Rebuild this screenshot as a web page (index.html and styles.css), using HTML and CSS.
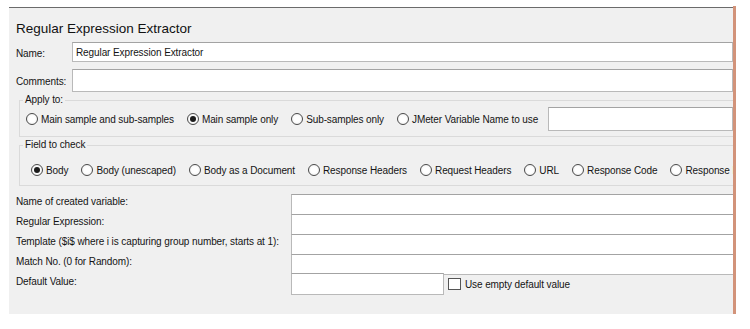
FILE: index.html
```html
<!DOCTYPE html>
<html lang="en">
<head>
    <meta charset="UTF-8">
    <meta name="viewport" content="width=device-width, initial-scale=1.0">
    <title>Regular Expression Extractor</title>
    <link rel="stylesheet" href="styles.css">
</head>
<body>
    <div class="window">
        <div class="panel">
            <h1 class="title">Regular Expression Extractor</h1>

            <div class="field-row name-row">
                <label class="row-label">Name:</label>
                <div class="text-box">Regular Expression Extractor</div>
            </div>
            <div class="field-row comments-row">
                <label class="row-label">Comments:</label>
                <div class="text-box"></div>
            </div>

            <fieldset class="group apply-group">
                <legend>Apply to:</legend>
                <div class="radio-row">
                    <span class="radio"><span class="dot"></span>Main sample and sub-samples</span>
                    <span class="radio"><span class="dot checked"></span>Main sample only</span>
                    <span class="radio"><span class="dot"></span>Sub-samples only</span>
                    <span class="radio"><span class="dot"></span>JMeter Variable Name to use</span>
                    <div class="text-box var-box"></div>
                </div>
            </fieldset>

            <fieldset class="group check-group">
                <legend>Field to check</legend>
                <div class="radio-row">
                    <span class="radio"><span class="dot checked"></span>Body</span>
                    <span class="radio"><span class="dot"></span>Body (unescaped)</span>
                    <span class="radio"><span class="dot"></span>Body as a Document</span>
                    <span class="radio"><span class="dot"></span>Response Headers</span>
                    <span class="radio"><span class="dot"></span>Request Headers</span>
                    <span class="radio"><span class="dot"></span>URL</span>
                    <span class="radio"><span class="dot"></span>Response Code</span>
                    <span class="radio"><span class="dot"></span>Response Message</span>
                </div>
            </fieldset>

            <div class="settings">
                <label>Name of created variable:</label>
                <div class="text-box"></div>
                <label>Regular Expression:</label>
                <div class="text-box"></div>
                <label>Template ($i$ where i is capturing group number, starts at 1):</label>
                <div class="text-box"></div>
                <label>Match No. (0 for Random):</label>
                <div class="text-box"></div>
                <label>Default Value:</label>
                <div class="default-row">
                    <div class="text-box default-box"></div>
                    <span class="check"><span class="box"></span>Use empty default value</span>
                </div>
            </div>
        </div>
    </div>
</body>
</html>
```

FILE: styles.css
```css
body {
    margin: 0;
    background-color: #fff;
    font-family: Tahoma, "Liberation Sans", Arial, sans-serif;
    font-size: 10px;
    letter-spacing: -0.1px;
    color: #141414;
}

.window {
    margin: 6px 0 0 9px;
    width: 724px;
    padding-top: 1px;
    border-right: 3px solid #d2937a;
}

.panel {
    height: 306px;
    border-top: 1px solid #6b6b6b;
    background-color: #f0f0f0;
    padding-left: 7px;
    overflow: hidden;
    white-space: nowrap;
}

.title {
    margin: 0;
    padding: 11px 0 3px;
    font-size: 13.5px;
    font-weight: normal;
    letter-spacing: 0;
    line-height: 20px;
    color: #111;
}

.field-row {
    display: flex;
    align-items: center;
}

.row-label {
    width: 56px;
    flex: none;
    padding-top: 2px;
}

.text-box {
    box-sizing: border-box;
    background-color: #fff;
    border: 1px solid #b9b9b9;
    border-top-color: #a3a3a3;
    padding: 1px 0 0 3px;
    line-height: 18px;
    width: 800px;
}

.name-row .text-box {
    height: 20px;
}

.comments-row {
    margin-top: 7px;
}

.comments-row .text-box {
    height: 23px;
}

.group {
    margin: 1px 0 0 3px;
    padding: 0;
    border: 1px solid #dadada;
    border-right: none;
    min-width: 0;
}

.group legend {
    padding: 0 2px;
    margin-left: 3px;
    line-height: 14px;
}

.radio-row {
    display: flex;
    align-items: center;
    gap: 13px;
}

.apply-group .radio-row {
    height: 24px;
    padding: 0 0 5px 6px;
}

.check-group {
    margin-top: 1px;
}

.check-group .radio-row {
    height: 26px;
    padding: 5px 0 2px 11px;
}

.radio {
    display: flex;
    align-items: center;
    gap: 3px;
    flex: none;
}

.dot {
    box-sizing: border-box;
    width: 12px;
    height: 12px;
    border: 1px solid #4a4a4a;
    border-radius: 50%;
    background: radial-gradient(circle, #fff 40%, #e8e8e8 100%);
    position: relative;
}

.dot.checked::after {
    content: "";
    position: absolute;
    left: 2px;
    top: 2px;
    width: 6px;
    height: 6px;
    border-radius: 50%;
    background-color: #1b1b1b;
}

.var-box {
    height: 24px;
    margin-left: -3px;
    width: 200px;
}

.settings {
    margin-top: 8px;
    display: grid;
    grid-template-columns: 275px 1fr;
    grid-auto-rows: 20px;
}

.settings label {
    line-height: 14px;
    padding-top: 1px;
}

.settings > .text-box {
    height: 21px;
}

.default-row {
    display: flex;
    align-items: center;
    gap: 4px;
}

.default-box {
    width: 153px;
    height: 22px;
}

.check {
    display: flex;
    align-items: center;
    gap: 4px;
}

.check .box {
    box-sizing: border-box;
    width: 13px;
    height: 12px;
    border: 1px solid #555;
    background-color: #fff;
}
```
